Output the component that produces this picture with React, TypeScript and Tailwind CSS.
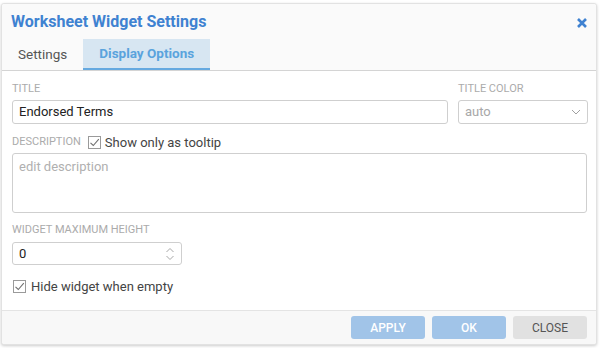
import React from "react";

const Check = () => (
  <span className="inline-flex h-[13px] w-[13px] items-center justify-center border border-[#9a9a9a] bg-white">
    <svg width="11" height="11" viewBox="0 0 11 11" fill="none">
      <path d="M1.5 5.8 L4.3 8.5 L9.8 2.2" stroke="#707070" strokeWidth="1.1" />
    </svg>
  </span>
);

export default function App() {
  return (
    <div className="h-[348px] w-[601px] overflow-hidden bg-white pl-px pt-[3px]" style={{ fontFamily: "Roboto, 'Open Sans', sans-serif" }}>
      <div className="flex h-[342px] w-[596px] flex-col rounded-[3px] border border-[#e2e2e2] bg-white shadow-[0_1px_3px_rgba(0,0,0,0.2)]">
        {/* header */}
        <div className="rounded-t-[3px] bg-[#fafafa]">
          <div className="flex h-[35px] items-center justify-between pl-[9px] pr-[8px]">
            <span className="text-[16px] font-bold text-[#3f82d1]">Worksheet Widget Settings</span>
            <svg width="12" height="12" viewBox="0 0 12 12" className="mt-[2px]">
              <path d="M2 2 L10 10 M10 2 L2 10" stroke="#3f82d1" strokeWidth="2.6" strokeLinecap="butt" />
            </svg>
          </div>
          <div className="flex h-[32px] items-stretch border-b border-[#d4d4d4]">
            <div className="flex items-center px-[16px] text-[13.5px] text-[#555]">Settings</div>
            <div className="flex items-center border-b-2 border-[#65a9e0] bg-[#d7e6f2] px-[16px] text-[13.5px] font-bold text-[#5aa3dd]">
              Display Options
            </div>
          </div>
        </div>
        {/* body */}
        <div className="flex flex-1 flex-col pl-[10px] pr-[8px] pt-[12px]">
          <div className="flex gap-[10px]">
            <div className="flex w-[436px] flex-col">
              <div className="h-[17px] text-[11px] uppercase leading-[12px] text-[#ababab]">Title</div>
              <div className="flex h-[24px] items-center rounded-[3px] border border-[#cfcfcf] px-[6px] text-[13px] text-[#222]">
                Endorsed Terms
              </div>
            </div>
            <div className="flex w-[130px] flex-col">
              <div className="h-[17px] text-[11px] uppercase leading-[12px] text-[#ababab]">Title Color</div>
              <div className="flex h-[24px] items-center justify-between rounded-[3px] border border-[#cfcfcf] px-[6px] text-[13px] text-[#a8a8a8]">
                <span>auto</span>
                <svg width="10" height="6" viewBox="0 0 10 6">
                  <path d="M1 1 L5 5 L9 1" stroke="#a0a0a0" strokeWidth="1" fill="none" />
                </svg>
              </div>
            </div>
          </div>
          <div className="mt-[9px] flex h-[19px] items-center">
            <span className="text-[11px] uppercase text-[#ababab]">Description</span>
            <span className="ml-[7px]"><Check /></span>
            <span className="ml-[4px] text-[13px] text-[#444]">Show only as tooltip</span>
          </div>
          <div className="mt-[1px] h-[60px] w-[575px] rounded-[3px] border border-[#cfcfcf] px-[6px] pt-[3px] text-[13px] text-[#b0b0b0]">
            edit description
          </div>
          <div className="mt-[11px] h-[18px] text-[11px] uppercase leading-[12px] text-[#ababab]">Widget Maximum Height</div>
          <div className="flex h-[23px] w-[170px] items-center justify-between rounded-[3px] border border-[#cfcfcf] pl-[6px] pr-[6px] text-[13px] text-[#222]">
            <span>0</span>
            <svg width="10" height="16" viewBox="0 0 10 16">
              <path d="M1.5 6 L5 2.5 L8.5 6 M1.5 10 L5 13.5 L8.5 10" stroke="#a8a8a8" strokeWidth="1" fill="none" />
            </svg>
          </div>
          <div className="mt-[12px] flex items-center gap-[5px] pl-[1px]">
            <Check />
            <span className="text-[13px] text-[#444]">Hide widget when empty</span>
          </div>
        </div>
        {/* footer */}
        <div className="flex h-[34px] items-center justify-end gap-[7px] rounded-b-[3px] border-t border-[#e4e4e4] bg-[#f8f8f8] pr-[9px]">
          <div className="flex h-[23px] w-[74px] items-center justify-center rounded-[3px] bg-[#a1c4e8] text-[12px] font-medium text-white">APPLY</div>
          <div className="flex h-[23px] w-[74px] items-center justify-center rounded-[3px] bg-[#a1c4e8] text-[12px] font-medium text-white">OK</div>
          <div className="flex h-[23px] w-[74px] items-center justify-center rounded-[3px] bg-[#e1e1e1] text-[12px] text-[#555]">CLOSE</div>
        </div>
      </div>
    </div>
  );
}
